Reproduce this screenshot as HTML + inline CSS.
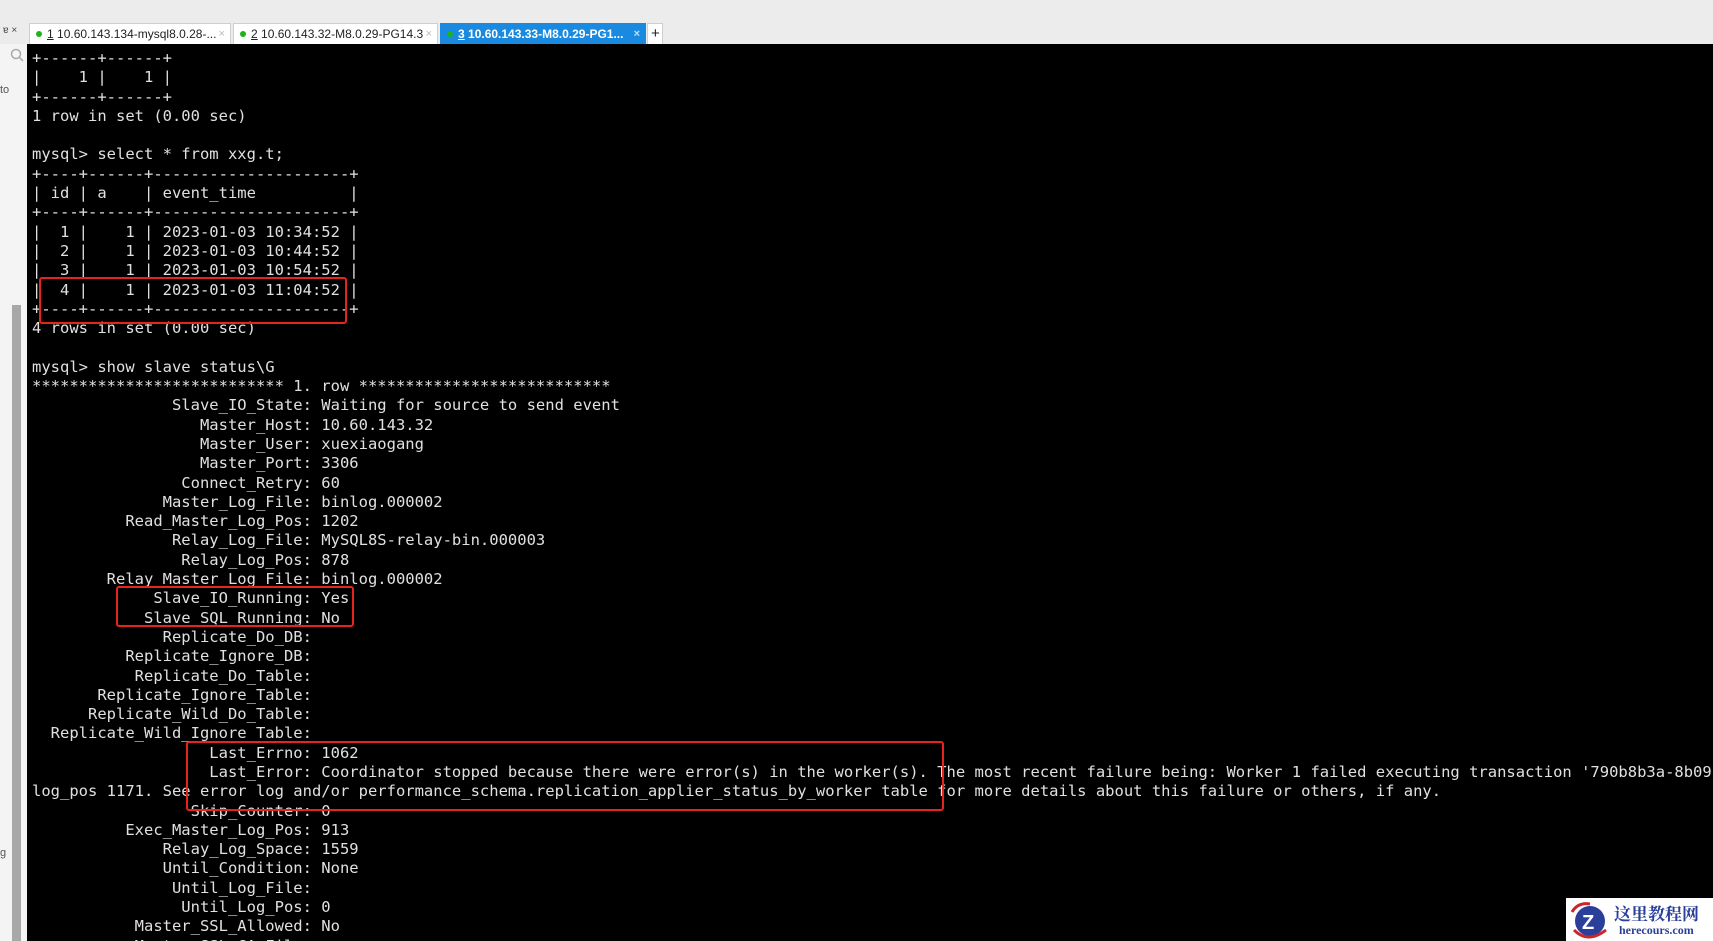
<!DOCTYPE html>
<html><head><meta charset="utf-8"><style>
body{margin:0;width:1713px;height:941px;overflow:hidden;background:#ececec;position:relative;font-family:"Liberation Sans",sans-serif}
#top{position:absolute;left:0;top:0;width:1713px;height:22px;background:#ececec}
#tabs{position:absolute;left:0;top:22px;height:22px;width:1713px;background:#ececec}
.tab{position:absolute;top:1px;height:21px;background:#fff;border:1px solid #cfcfcf;border-bottom:none;box-sizing:border-box;font-size:12px;line-height:20px;color:#222;white-space:nowrap;overflow:hidden;padding-left:6px}
.tab .d{display:inline-block;width:6px;height:6px;border-radius:50%;background:#1db31d;margin-right:5px;vertical-align:1px}
.tab .x{position:absolute;right:5px;top:0;color:#bbb;font-size:11px}
.tab.act{background:#1a8ae0;color:#fff;border-color:#1a8ae0;font-weight:bold}
.tab.act .x{color:#bfe0ff}
#left{position:absolute;left:0;top:44px;width:27px;height:897px;background:#f4f4f4;border-right:1px solid #ccc}
#sb{position:absolute;left:12px;width:9px;height:636px;background:#a8a8a8}
#term{position:absolute;left:27px;top:44px;width:1686px;height:897px;background:#000;overflow:hidden}
pre{margin:0;position:absolute;left:5px;top:5px;font-family:"DejaVu Sans Mono","Liberation Mono",monospace;font-size:15.5px;line-height:19.3px;color:#e0e0e0;white-space:pre}
.box{position:absolute;border:2.5px solid #e8221c;border-radius:3px}
#logo{position:absolute;left:1566px;top:898px;width:147px;height:43px;background:#fff}
</style></head><body>
<div id="top"></div>
<div id="tabs">
<span style="position:absolute;left:3px;top:3px;font-size:10px;color:#444">ɐ ×</span>
<div class="tab" style="left:29px;width:202px"><span class="d"></span><u>1</u> 10.60.143.134-mysql8.0.28-...<span class="x">×</span></div>
<div class="tab" style="left:233px;width:205px"><span class="d"></span><u>2</u> 10.60.143.32-M8.0.29-PG14.3<span class="x">×</span></div>
<div class="tab act" style="left:440px;width:206px"><span class="d"></span><u>3</u> 10.60.143.33-M8.0.29-PG1...<span class="x">×</span></div>
<div class="tab" style="left:647px;width:16px;padding-left:3px;font-size:15px">+</div>
</div>
<div id="left">
<svg style="position:absolute;left:10px;top:4px" width="14" height="14"><circle cx="6" cy="6" r="4.5" fill="none" stroke="#aaa" stroke-width="1.5"/><line x1="9" y1="9" x2="13" y2="13" stroke="#aaa" stroke-width="1.5"/></svg>
<span style="position:absolute;left:0;top:40px;font-size:11px;color:#555">to</span>
<span style="position:absolute;left:0;top:803px;font-size:11px;color:#555">g</span>
<div id="sb" style="top:261px"></div>
</div>
<div id="term"><pre>+------+------+
|    1 |    1 |
+------+------+
1 row in set (0.00 sec)

mysql&gt; select * from xxg.t;
+----+------+---------------------+
| id | a    | event_time          |
+----+------+---------------------+
|  1 |    1 | 2023-01-03 10:34:52 |
|  2 |    1 | 2023-01-03 10:44:52 |
|  3 |    1 | 2023-01-03 10:54:52 |
|  4 |    1 | 2023-01-03 11:04:52 |
+----+------+---------------------+
4 rows in set (0.00 sec)

mysql&gt; show slave status\G
*************************** 1. row ***************************
               Slave_IO_State: Waiting for source to send event
                  Master_Host: 10.60.143.32
                  Master_User: xuexiaogang
                  Master_Port: 3306
                Connect_Retry: 60
              Master_Log_File: binlog.000002
          Read_Master_Log_Pos: 1202
               Relay_Log_File: MySQL8S-relay-bin.000003
                Relay_Log_Pos: 878
        Relay_Master_Log_File: binlog.000002
             Slave_IO_Running: Yes
            Slave_SQL_Running: No
              Replicate_Do_DB: 
          Replicate_Ignore_DB: 
           Replicate_Do_Table: 
       Replicate_Ignore_Table: 
      Replicate_Wild_Do_Table: 
  Replicate_Wild_Ignore_Table: 
                   Last_Errno: 1062
                   Last_Error: Coordinator stopped because there were error(s) in the worker(s). The most recent failure being: Worker 1 failed executing transaction '790b8b3a-8b09
log_pos 1171. See error log and/or performance_schema.replication_applier_status_by_worker table for more details about this failure or others, if any.
                 Skip_Counter: 0
          Exec_Master_Log_Pos: 913
              Relay_Log_Space: 1559
              Until_Condition: None
               Until_Log_File: 
                Until_Log_Pos: 0
           Master_SSL_Allowed: No
           Master_SSL_CA_File: </pre></div>
<div class="box" style="left:39px;top:277px;width:304px;height:43px"></div>
<div class="box" style="left:116px;top:586px;width:234px;height:37px"></div>
<div class="box" style="left:186px;top:741px;width:754px;height:66px"></div>
<div id="logo">
<svg style="position:absolute;left:2px;top:2px" width="42" height="40"><circle cx="22" cy="21" r="15" fill="#2a3f9a"/><path d="M4 12 Q10 2 22 4" stroke="#c8262a" stroke-width="3" fill="none"/><path d="M6 30 Q20 44 38 30" stroke="#c8262a" stroke-width="3" fill="none"/><text x="14" y="29" font-size="20" font-weight="bold" fill="#fff" font-family="Liberation Sans">Z</text></svg>
<div style="position:absolute;left:48px;top:2px;font-size:17px;font-weight:bold;color:#2a3f9a;font-family:'Liberation Serif','Noto Serif CJK SC',serif">这里教程网</div>
<div style="position:absolute;left:53px;top:25px;font-size:12px;font-weight:bold;color:#2a3f9a;font-family:'Liberation Serif',serif">herecours.com</div>
</div>
</body></html>
